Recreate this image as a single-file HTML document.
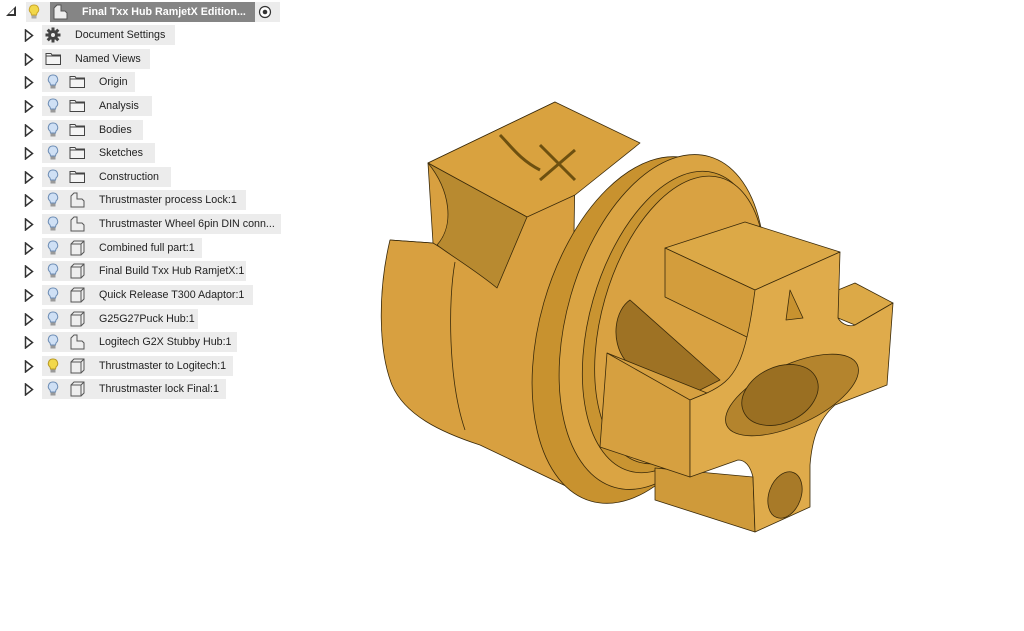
<!DOCTYPE html>
<html><head><meta charset="utf-8"><style>
body{margin:0;width:1024px;height:631px;background:#fff;position:relative;overflow:hidden;font-family:"Liberation Sans",Arial,sans-serif;font-size:10.7px;color:#222}
.row{position:absolute;left:0;height:20px}
.tri{position:absolute;left:24px;top:4px}
.bg{position:absolute;top:0;height:20px;background:#ececec}
.t{position:absolute;top:4px;white-space:nowrap}
.ic{position:absolute;top:2px}
</style></head><body>
<div class="row" style="top:2px;width:290px">
 <svg class="tri" style="left:5px;top:3px" width="12" height="12"><path d="M1,11 L11,11 L11,1 Z" fill="#333"/><path d="M4,9 L9,9 L9,4Z" fill="#fff"/></svg>
 <div class="bg" style="left:26px;width:254px"></div>
 <svg class="ic" style="left:27px" width="14" height="16"><path d="M7,1 a4.5,4.5 0 0 1 3,8 l-0.5,2 h-5 l-0.5,-2 a4.5,4.5 0 0 1 3,-8z" fill="#f2d84a" stroke="#c9a52b"/><rect x="4.5" y="11.5" width="5" height="3" fill="#aaa"/></svg>
 <div class="bg" style="left:50px;width:205px;background:#858585"></div>
 <svg class="ic" style="left:52px" width="16" height="16"><path d="M2,4 L5,1 H9 V7 H13 L15,9 V15 H2Z" fill="#eee" stroke="#555"/></svg>
 <div class="t" style="left:82px;color:#fff;font-weight:bold">Final Txx Hub RamjetX Edition...</div>
 <svg class="ic" style="left:258px;top:3px" width="14" height="14"><circle cx="7" cy="7" r="5.5" fill="#fff" stroke="#333" stroke-width="1.2"/><circle cx="7" cy="7" r="2.3" fill="#333"/></svg>
</div>
<div id="rows"></div>
<script>
const R=[
["gear","","Document Settings",35,75,175],
["","","Named Views",59,75,150],
["b","f","Origin",82,99,135],
["b","f","Analysis",106,99,152],
["b","f","Bodies",130,99,143],
["b","f","Sketches",153,99,155],
["b","f","Construction",177,99,171],
["b","c","Thrustmaster process Lock:1",200,99,246],
["b","c","Thrustmaster Wheel 6pin DIN conn...",224,99,281],
["b","s","Combined full part:1",248,99,202],
["b","s","Final Build Txx Hub RamjetX:1",271,99,246],
["b","s","Quick Release T300 Adaptor:1",295,99,253],
["b","s","G25G27Puck Hub:1",319,99,198],
["b","c","Logitech G2X Stubby Hub:1",342,99,237],
["y","s","Thrustmaster to Logitech:1",366,99,233],
["b","s","Thrustmaster lock Final:1",389,99,226]];
let h='';
for(const r of R){
 const top=r[3]-10;
 h+=`<div class="row" style="top:${top}px;width:300px">`;
 h+=`<svg class="tri" width="10" height="13"><path d="M1.5,1 L8.5,6.5 L1.5,12Z" fill="#fff" stroke="#333" stroke-width="1.5"/></svg>`;
 h+=`<div class="bg" style="left:42px;width:${r[5]-42}px"></div>`;
 if(r[0]=="gear"){h+=`<svg class="ic" style="left:45px" width="16" height="16" viewBox="0 0 16 16"><g fill="#444"><circle cx="8" cy="8" r="5"/><rect x="6.5" y="0.5" width="3" height="15"/><rect x="0.5" y="6.5" width="15" height="3"/><rect x="6.5" y="0.5" width="3" height="15" transform="rotate(45 8 8)"/><rect x="6.5" y="0.5" width="3" height="15" transform="rotate(-45 8 8)"/></g><circle cx="8" cy="8" r="2" fill="#ececec"/></svg>`;}
 else if(r[0]=="b"||r[0]=="y"){const c=r[0]=="b"?"#cfe0f5":"#f2d84a",s=r[0]=="b"?"#6d8db5":"#b99a25";
  h+=`<svg class="ic" style="left:46px" width="14" height="16"><path d="M7,1 a4.5,4.5 0 0 1 3,8 l-0.5,2 h-5 l-0.5,-2 a4.5,4.5 0 0 1 3,-8z" fill="${c}" stroke="${s}"/><rect x="4.5" y="11.5" width="5" height="3" fill="#999"/></svg>`;}
 const fx=r[0]==""?45:69;
 if(r[1]=="f"||r[0]==""&&r[1]==""){h+=`<svg class="ic" style="left:${fx}px" width="17" height="15"><path d="M1,2.5 H6 L7,4 H15.5 V13.5 H1Z M1,5 H15.5" fill="#f4f4f4" stroke="#444"/></svg>`;}
 else if(r[1]=="c"){h+=`<svg class="ic" style="left:69px" width="17" height="16"><path d="M2,4 L5,1 H8 V7 H13 L15,9 V15 H2Z" fill="#eee" stroke="#555"/></svg>`;}
 else if(r[1]=="s"){h+=`<svg class="ic" style="left:69px" width="17" height="16"><path d="M2,4 L5,1 H15 V12 L12,15 H2Z M2,4 H12 V15 M12,4 L15,1" fill="#eee" stroke="#555"/></svg>`;}
 h+=`<div class="t" style="left:${r[4]}px">${r[2]}</div></div>`;
}
document.getElementById('rows').innerHTML=h;
</script>
<svg style="position:absolute;left:0;top:0" width="1024" height="631" stroke="#3a2a0a" stroke-width="0.8" stroke-linejoin="round">
 <path d="M390,240 C378,290 378,350 392,385 C405,415 440,432 480,445 L570,488 L575,170 L555,102 L428,163 L433,243 Z" fill="#d8a040"/>
 <path d="M455,262 C448,300 448,380 465,430" fill="none"/>
 <path d="M390,240 L433,243 C445,250 470,265 497,287" fill="none"/>
 <path d="M428,163 L555,102 L640,143 L575,195 L527,217 Z" fill="#d9a23f"/>
 <path d="M428,163 L527,217 L497,288 C475,270 450,255 437,245 C455,225 450,190 428,163Z" fill="#b88a30"/>
 <path d="M500,135 C510,145 520,160 540,170 M540,145 L575,180 M575,150 L540,180" fill="none" stroke="#6d5010" stroke-width="3"/>
 <ellipse cx="640" cy="330" rx="100" ry="178" transform="rotate(16 640 330)" fill="#c8922f"/>
 <ellipse cx="662" cy="322" rx="95" ry="172" transform="rotate(16 662 322)" fill="#daa443"/>
 <ellipse cx="672" cy="322" rx="82" ry="155" transform="rotate(16 672 322)" fill="#c99431"/>
 <ellipse cx="680" cy="320" rx="78" ry="148" transform="rotate(16 680 320)" fill="#d9a242"/>
 <path d="M655,468 L753,477 L755,532 L655,500 Z" fill="#cf9a3a"/>
 <path d="M665,248 L745,222 L840,252 L755,290 Z" fill="#dca947"/>
 <path d="M665,248 L755,290 L753,340 L665,297 Z" fill="#d39d3c"/>
 <path d="M630,300 C615,310 610,340 625,360 L690,395 L720,380 Z" fill="#9e7224"/>
 <path d="M607,353 L707,393 L690,400 L690,477 L600,447 Z" fill="#d6a040"/>
 <path d="M607,353 L690,400" fill="none"/>
 <path d="M838,290 L855,283 L893,303 L855,325 L838,318 Z" fill="#dca947"/>
 <path d="M755,290 L840,252 L838,318 C842,325 850,327 855,325 L893,303 L887,385 L835,405 C818,420 812,440 810,465 L810,507 L755,532 L753,477 C750,465 745,460 738,460 L690,477 L690,400 L707,393 C735,380 745,365 755,290 Z" fill="#dfab4b"/>
 <ellipse cx="792" cy="395" rx="72" ry="30" transform="rotate(-25 792 395)" fill="#b4842d"/>
 <ellipse cx="780" cy="395" rx="40" ry="28" transform="rotate(-25 780 395)" fill="#9a6f22"/>
 <path d="M790,290 L803,318 L786,320 Z" fill="#c8922f"/>
 <ellipse cx="785" cy="495" rx="16" ry="24" transform="rotate(20 785 495)" fill="#a87a28"/>
</svg>
</body></html>
